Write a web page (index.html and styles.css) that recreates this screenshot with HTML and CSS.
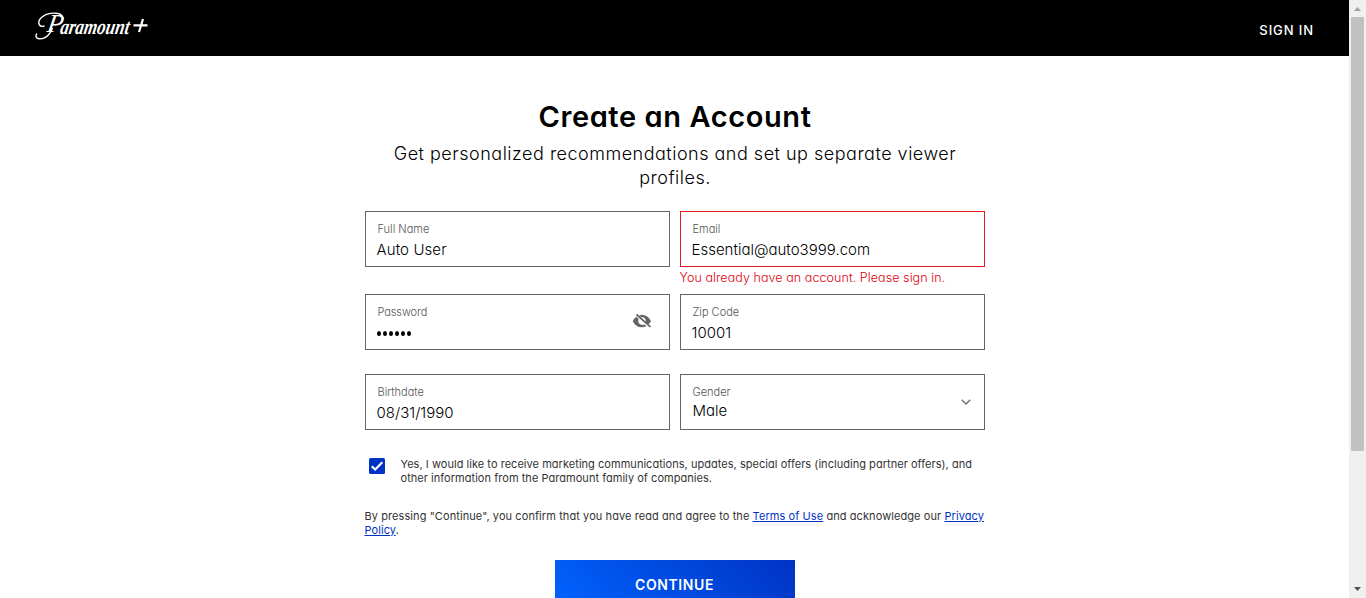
FILE: index.html
```html
<!DOCTYPE html>
<html lang="en">
<head>
<meta charset="utf-8">
<title>Create an Account</title>
<link rel="stylesheet" href="styles.css">
</head>
<body>
<div class="page">
  <header class="header">
    <svg class="logo" width="114" height="28" viewBox="0 0 114 28" role="img" aria-label="Paramount+">
      <g class="swash">
        <path d="M9.500 14C3 16 2 9 7 5C12 1 19 .6 23 1.500C31 3 29 13.500 18 12.800"/>
        <path d="M17.500 16C14 25 8 28 3 26.500C.5 26 .5 23 2 21.500"/>
      </g>
      <text class="logo-word" transform="translate(0 22) skewX(-10)"><tspan class="logo-cap" x="11" y="-2">P</tspan><tspan x="24.500" y="0" textLength="69" lengthAdjust="spacingAndGlyphs">aramount</tspan></text>
      <path class="plus" d="M98.500 13.300H112.500M108 7L104 20"/>
    </svg>
    <a class="sign-in">SIGN IN</a>
  </header>
  <main class="content">
    <h1 class="title">Create an Account</h1>
    <p class="subtitle">Get personalized recommendations and set up separate viewer<br>profiles.</p>
    <form class="form">
      <div class="field"><span class="label">Full Name</span><span class="value wide">Auto User</span></div>
      <div class="field invalid"><span class="label">Email</span><span class="value">Essential@auto3999.com</span></div>
      <p class="error">You already have an account. Please sign in.</p>
      <div class="field"><span class="label tight">Password</span><span class="value dots"><i></i><i></i><i></i><i></i><i></i><i></i></span>
        <svg class="eye" width="20" height="16" viewBox="0 0 20 16"><path fill="#646464" d="M5 .8L19 13.300L17.900 14.500L3.900 2.200ZM7.200 2.200Q14.500.4 19 8.200Q18 10.200 16 11.600L13.600 9.500Q14.600 5.500 10.800 4.300L9.400 4.300ZM4.300 3.700L6.700 5.900Q5 10.500 10 12L12.500 11.400L14.500 13.200Q5.500 17 .7 8.300Q1.900 5.400 4.300 3.700Z"/></svg>
      </div>
      <div class="field"><span class="label">Zip Code</span><span class="value">10001</span></div>
      <div class="field last"><span class="label">Birthdate</span><span class="value">08/31/1990</span></div>
      <div class="field last"><span class="label">Gender</span><span class="value gender">Male</span>
        <svg class="chevron" width="10" height="6" viewBox="0 0 10 6"><path d="M.7.700L5 5L9.300.700" fill="none" stroke="#707070" stroke-width="1.400"/></svg>
      </div>
    </form>
    <div class="consent">
      <svg class="check" width="16" height="16" viewBox="0 0 16 16"><rect width="16" height="16" rx="1.500" fill="#0033c4"/><path d="M2.700 8.200L6.200 11.500L13.300 4.300" fill="none" stroke="#fff" stroke-width="2.100"/></svg>
      <p class="small">Yes, I would like to receive marketing communications, updates, special offers (including partner offers), and<br>other information from the Paramount family of companies.</p>
    </div>
    <p class="small legal">By pressing "Continue", you confirm that you have read and agree to the <a>Terms of Use</a> and acknowledge our <a>Privacy</a><br><a>Policy</a>.</p>
    <button class="continue">CONTINUE</button>
  </main>
</div>
<div class="scrollbar">
  <svg class="arrow" width="7" height="4" viewBox="0 0 7 4"><path d="M0 4L3.500 0L7 4Z" fill="#a3a3a3"/></svg>
  <div class="thumb"></div>
  <svg class="arrow down" width="7" height="4" viewBox="0 0 7 4"><path d="M0 0H7L3.500 4Z" fill="#505050"/></svg>
</div>
</body>
</html>
```
FILE: styles.css
```css
* { box-sizing: border-box; }
body {
  margin: 0;
  height: 598px;
  overflow: hidden;
  display: flex;
  background: #fff;
  color: #000;
  font-family: Inter, "Liberation Sans", sans-serif;
  font-feature-settings: "cv11" 1;
}
h1, p { margin: 0; }
.page { flex: 1; height: 598px; overflow: hidden; }
.header {
  height: 56px;
  padding: 12px 35px 0;
  display: flex;
  justify-content: space-between;
  background: #000;
  color: #fff;
}
.logo { overflow: visible; }
.logo-word { font-family: "Liberation Serif", serif; font-style: italic; fill: #fff; font-size: 22px; font-weight: 700; }
.logo-cap { font-size: 26px; font-weight: 400; }
.swash path { fill: none; stroke: #fff; stroke-width: 1.4; }
.plus { fill: none; stroke: #fff; stroke-width: 2.2; }
.sign-in { font-size: 13px; line-height: 16px; font-weight: 500; letter-spacing: 0.9px; padding-top: 10px; white-space: nowrap; }
.content { width: 620px; margin: 0 auto; padding-top: 43px; }
.title { font-size: 29px; line-height: 36px; font-weight: 600; letter-spacing: 0.6px; padding-left: 1px; text-align: center; white-space: nowrap; }
.subtitle { font-size: 18px; line-height: 24px; font-weight: 300; letter-spacing: 0.5px; text-align: center; padding: 7px 0 0 1px; white-space: nowrap; }
.form {
  display: grid;
  grid-template-columns: 305px 305px;
  grid-template-rows: 56px 27px 56px 24px 56px;
  column-gap: 10px;
  margin-top: 21px;
}
.field {
  position: relative;
  height: 56px;
  border: 1px solid #646464;
  padding: 10px 0 0 12px;
  display: flex;
  flex-direction: column;
}
.field.last { grid-row: 5; }
.invalid { border-color: #e31b1f; }
.label { font-size: 11px; line-height: 14px; color: #555; font-weight: 300; white-space: nowrap; }
.label.tight { letter-spacing: -0.1px; }
.value { font-size: 15px; line-height: 20px; margin: 4px 0 0 -1px; font-weight: 300; color: #000; white-space: nowrap; }
.value.wide { letter-spacing: 0.1px; }
.value.gender { margin: 2px 0 0; }
.error { grid-column: 2; font-size: 12.5px; line-height: 16px; padding-top: 3px; color: #e0000f; font-weight: 300; letter-spacing: 0.07px; white-space: nowrap; }
.dots { display: flex; gap: 2px; padding: 8px 0 0; }
.dots i { width: 4px; height: 5px; border-radius: 50%; background: #000; }
.eye { position: absolute; right: 17px; top: 18px; }
.chevron { position: absolute; right: 13px; top: 24px; }
.consent { display: flex; gap: 16px; padding: 28px 0 0 4px; }
.check { flex: none; }
.small { font-size: 11px; line-height: 14px; color: #333; font-weight: 400; letter-spacing: 0.038px; white-space: nowrap; }
.consent .small { margin-top: -1px; }
.legal { padding-top: 24px; letter-spacing: 0.08px; }
.small a { color: #0033c4; text-decoration: underline; }
.continue {
  display: block;
  width: 240px;
  height: 50px;
  margin: 23px auto 0;
  border: 0;
  padding: 0;
  background: linear-gradient(45deg, #0064ff 0%, #0033c4 100%);
  color: #fff;
  font: 600 14px/20px Inter, sans-serif;
  letter-spacing: 0.6px;
}
.scrollbar {
  width: 17px;
  height: 598px;
  background: #f0f0f0;
  display: flex;
  flex-direction: column;
  align-items: center;
  padding-top: 7px;
}
.thumb { width: 13px; height: 434px; margin-top: 6px; background: #c1c1c1; }
.arrow { flex: none; }
.down { margin: auto 0 7px; }
```
